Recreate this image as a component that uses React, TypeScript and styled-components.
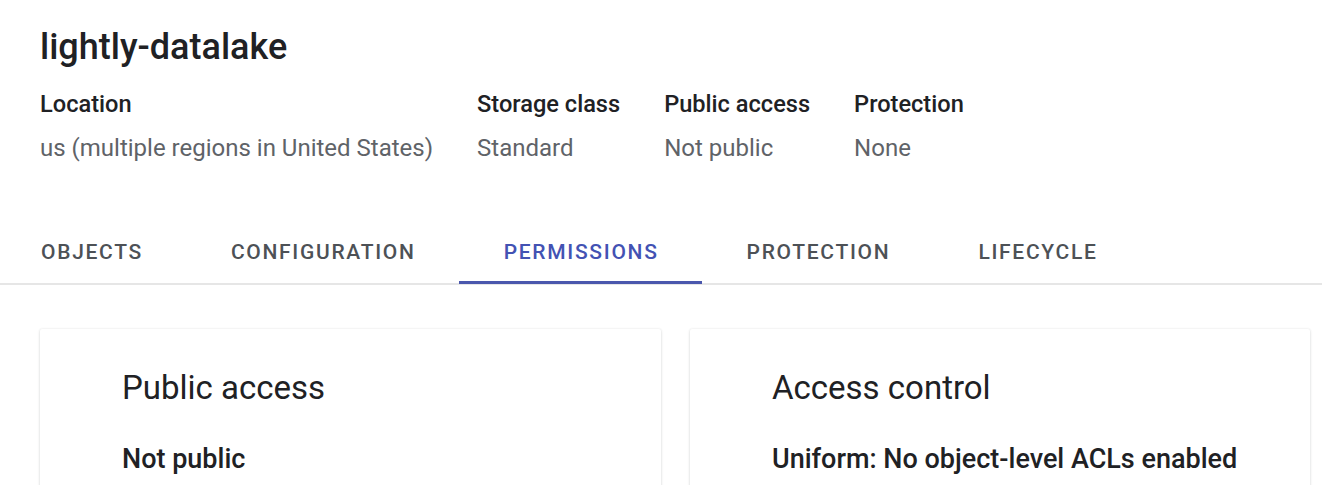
import React from "react";
import styled, { createGlobalStyle } from "styled-components";

const GlobalStyle = createGlobalStyle`
  html, body {
    margin: 0;
    padding: 0;
    background: #ffffff;
  }
  body {
    font-family: Roboto, "Liberation Sans", Arial, sans-serif;
    color: #202124;
    -webkit-font-smoothing: antialiased;
  }
`;

const Page = styled.div`
  display: flex;
  flex-direction: column;
  width: 1322px;
  height: 485px;
  overflow: hidden;
`;

const Header = styled.header`
  display: flex;
  flex-direction: column;
  padding: 25px 40px 0;
`;

const Title = styled.h1`
  margin: 0;
  font-size: 36px;
  line-height: 44px;
  font-weight: 500;
  color: #202124;
`;

const MetaRow = styled.div`
  display: flex;
  gap: 44px;
  margin-top: 20px;
`;

const MetaItem = styled.div`
  display: flex;
  flex-direction: column;
  gap: 13px;
`;

const MetaLabel = styled.div`
  font-size: 23.6px;
  line-height: 31px;
  font-weight: 500;
  color: #202124;
`;

const MetaValue = styled.div`
  font-size: 24px;
  line-height: 31px;
  font-weight: 400;
  color: #5f6368;
`;

const TabBar = styled.nav`
  display: flex;
  margin-top: 48px;
  border-bottom: 2px solid #e6e6e6;
`;

const Tab = styled.div<{ $active?: boolean }>`
  position: relative;
  display: flex;
  align-items: center;
  height: 71px;
  padding: 9px 43px 0 45px;
  font-size: 21px;
  font-weight: 500;
  letter-spacing: 1.7px;
  text-transform: uppercase;
  color: ${(p) => (p.$active ? "#4352b3" : "#4d5156")};
  box-sizing: border-box;

  &:first-child {
    padding-left: 41px;
  }

  &::after {
    content: "";
    position: absolute;
    left: 0;
    right: 0;
    bottom: -1px;
    height: 3px;
    background: ${(p) => (p.$active ? "#4a57ad" : "transparent")};
  }
`;

const Cards = styled.div`
  display: grid;
  grid-template-columns: 621px 620px;
  gap: 29px;
  padding: 44px 0 0 40px;
`;

const Card = styled.section`
  background: #ffffff;
  border-radius: 2px;
  box-shadow: 0 1px 3px rgba(60, 64, 67, 0.18), 0 0 2px rgba(60, 64, 67, 0.1);
  padding: 39px 30px 60px 82px;
  min-height: 300px;
`;

const CardTitle = styled.h2`
  margin: 0;
  font-size: 33px;
  line-height: 40px;
  font-weight: 400;
  color: #202124;
`;

const CardValue = styled.div`
  margin-top: 33px;
  font-size: 27px;
  line-height: 36px;
  font-weight: 500;
  color: #202124;
  white-space: nowrap;
`;

const meta = [
  { label: "Location", value: "us (multiple regions in United States)" },
  { label: "Storage class", value: "Standard" },
  { label: "Public access", value: "Not public" },
  { label: "Protection", value: "None" },
];

const tabs = ["Objects", "Configuration", "Permissions", "Protection", "Lifecycle"];

export default function App() {
  return (
    <>
      <GlobalStyle />
      <Page>
        <Header>
          <Title>lightly-datalake</Title>
          <MetaRow>
            {meta.map((m) => (
              <MetaItem key={m.label}>
                <MetaLabel>{m.label}</MetaLabel>
                <MetaValue>{m.value}</MetaValue>
              </MetaItem>
            ))}
          </MetaRow>
        </Header>
        <TabBar>
          {tabs.map((t) => (
            <Tab key={t} $active={t === "Permissions"}>
              {t}
            </Tab>
          ))}
        </TabBar>
        <Cards>
          <Card>
            <CardTitle>Public access</CardTitle>
            <CardValue>Not public</CardValue>
          </Card>
          <Card>
            <CardTitle>Access control</CardTitle>
            <CardValue>Uniform: No object-level ACLs enabled</CardValue>
          </Card>
        </Cards>
      </Page>
    </>
  );
}
